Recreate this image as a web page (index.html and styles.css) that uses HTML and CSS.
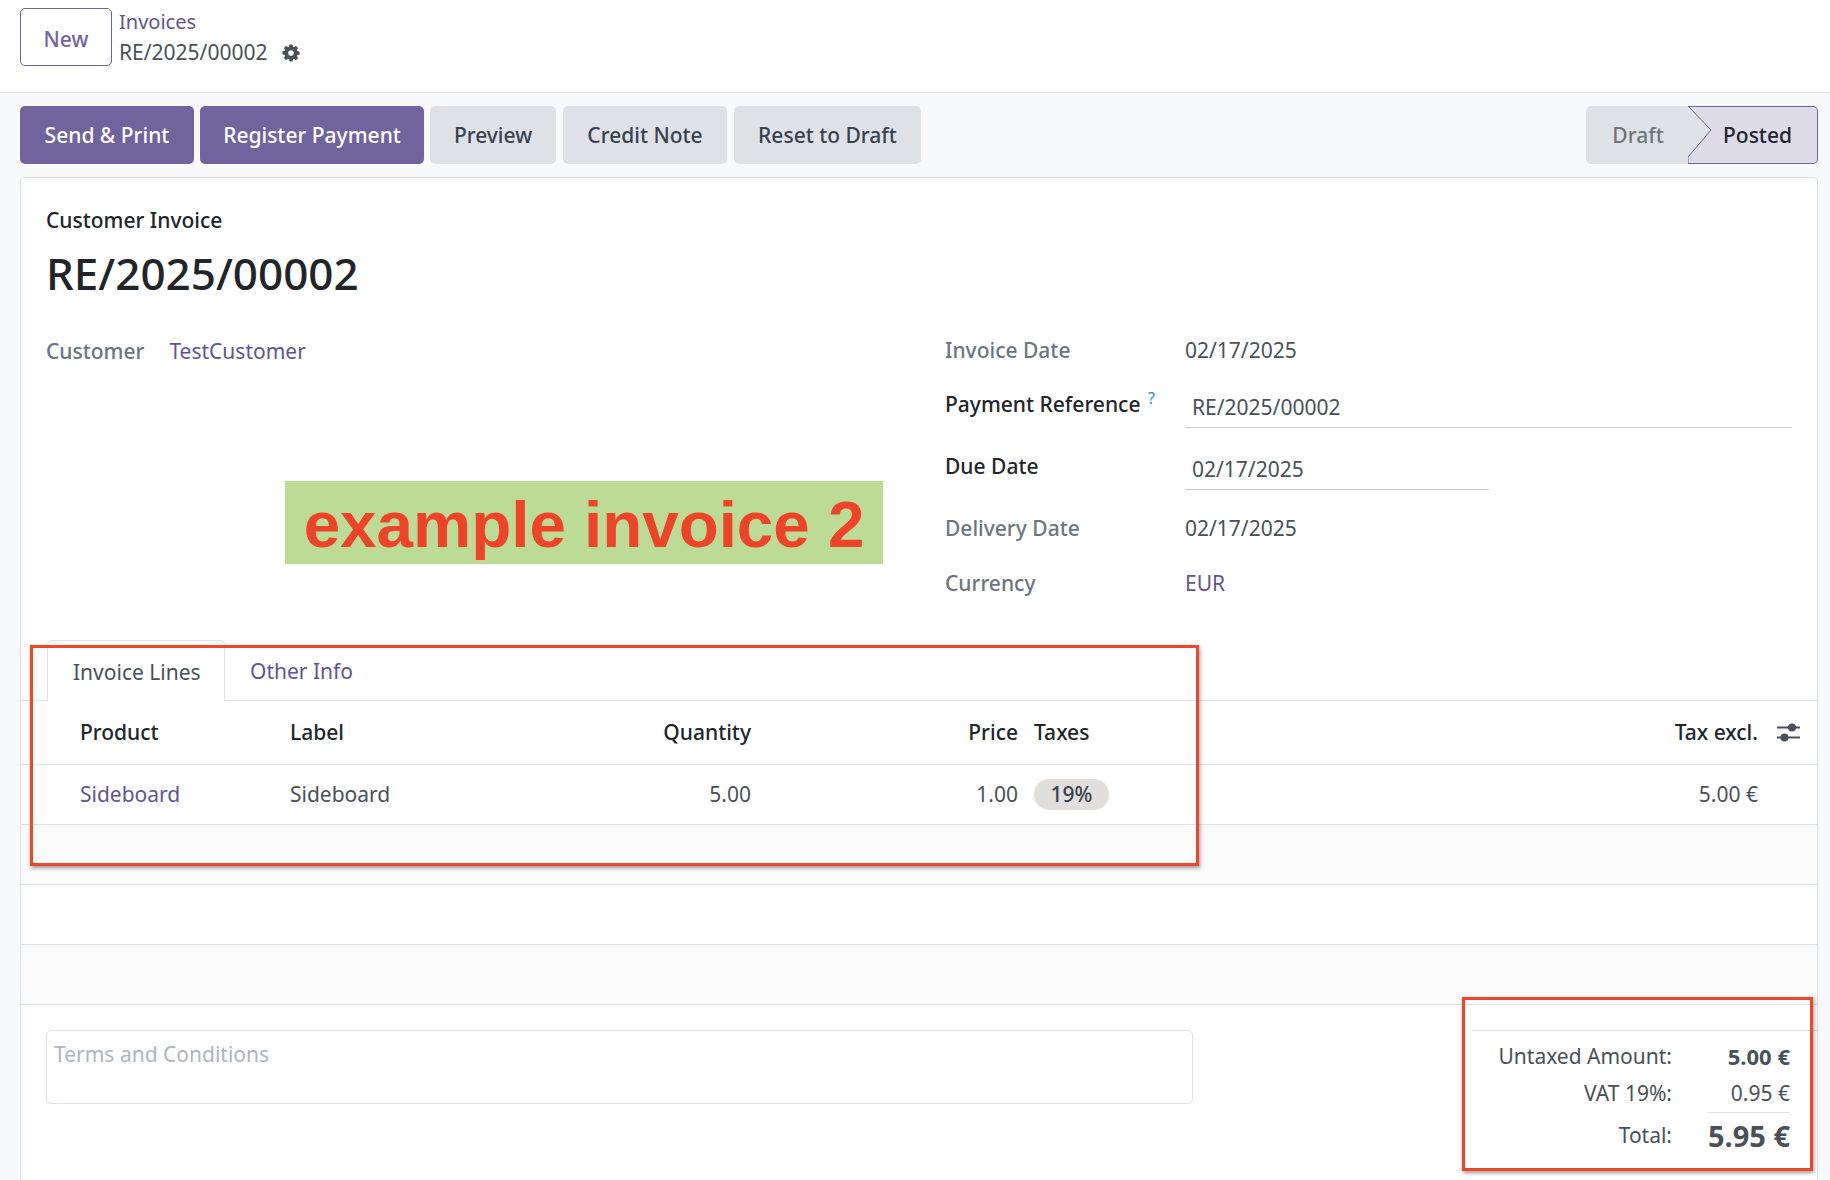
FILE: index.html

```html
<!DOCTYPE html>

<html>
    <head>
        <title>RE/2025/00002</title>
        <link rel="stylesheet" href="styles.css">
    </head>
    <body>
        <div class="topbar">
            <button class="btn_new">New</button>
            <div class="breadcrumb">
                <a class="link crumb_parent">Invoices</a>
                <div class="crumb_current">
                    <span>RE/2025/00002</span>
                    <svg class="gear" viewBox="0 0 1792 1792"><path fill="#495057" d="M1152 896q0-106-75-181t-181-75-181 75-75 181 75 181 181 75 181-75 75-181zm512-109v222q0 12-8 23t-20 13l-185 28q-19 54-39 91 35 50 107 138 10 12 10 25t-9 23q-27 37-99 108t-94 71q-12 0-26-9l-138-108q-44 23-91 38-16 136-29 186-7 28-36 28h-222q-14 0-24.500-8.500t-11.500-21.500l-28-184q-49-16-90-37l-141 107q-10 9-25 9-14 0-25-11-126-114-165-168-7-10-7-23 0-12 8-23 15-21 51-66.500t54-70.500q-27-50-41-99l-183-27q-13-2-21-12.500t-8-23.500v-222q0-12 8-23t19-13l186-28q14-46 39-92-40-57-107-138-10-12-10-24 0-10 9-23 26-36 98.500-107.500t94.500-71.500q13 0 26 10l138 107q44-23 91-38 16-136 29-186 7-28 36-28h222q14 0 24.500 8.500t11.500 21.500l28 184q49 16 90 37l142-107q9-9 24-9 13 0 25 10 129 119 165 170 7 8 7 22 0 12-8 23-15 21-51 66.500t-54 70.500q26 50 41 98l183 28q13 2 21 12.500t8 23.500z"/></svg>
                </div>
            </div>
        </div>

        <div class="actionbar">
            <button class="btn btn_primary btn_send">Send &amp; Print</button>
            <button class="btn btn_primary btn_register">Register Payment</button>
            <button class="btn btn_secondary btn_preview">Preview</button>
            <button class="btn btn_secondary btn_credit">Credit Note</button>
            <button class="btn btn_secondary btn_reset">Reset to Draft</button>
            <div class="statusbar">
                <div class="status_draft">Draft</div>
                <div class="status_posted">
                    <svg class="status_arrow" viewBox="0 0 24 58"><polygon points="0,0 23,24 0,51" fill="#dee2e6"/><polyline points="0,0 23,24 0,51 0,58" fill="none" stroke="#71639e" stroke-width="1"/></svg>
                    Posted
                </div>
            </div>
        </div>

        <div class="sheet">
            <div class="sheet_head">
                <div class="invoice_type">Customer Invoice</div>
                <h1>RE/2025/00002</h1>
            </div>

            <div class="groups">
                <div class="group_left">
                    <div class="customer">
                        <span class="label">Customer</span>
                        <a class="link">TestCustomer</a>
                    </div>
                    <div class="note">example invoice 2</div>
                </div>
                <div class="group_right">
                    <div class="field field_date">
                        <span class="label">Invoice Date</span>
                        <span class="value">02/17/2025</span>
                    </div>
                    <div class="field field_ref">
                        <span class="label label_strong">Payment Reference <sup class="help">?</sup></span>
                        <span class="value input input_wide">RE/2025/00002</span>
                    </div>
                    <div class="field field_due">
                        <span class="label label_strong">Due Date</span>
                        <span class="value input input_short">02/17/2025</span>
                    </div>
                    <div class="field field_delivery">
                        <span class="label">Delivery Date</span>
                        <span class="value">02/17/2025</span>
                    </div>
                    <div class="field field_currency">
                        <span class="label">Currency</span>
                        <a class="link value">EUR</a>
                    </div>
                </div>
            </div>

            <div class="tabs">
                <div class="tab tab_active">Invoice Lines</div>
                <a class="tab link">Other Info</a>
            </div>

            <table class="lines">
                <colgroup>
                    <col class="col_product">
                    <col class="col_label">
                    <col class="col_qty">
                    <col class="col_price">
                    <col class="col_taxes">
                    <col class="col_total">
                    <col class="col_opt">
                </colgroup>
                <thead>
                    <tr>
                        <th class="first">Product</th>
                        <th>Label</th>
                        <th class="num">Quantity</th>
                        <th class="num">Price</th>
                        <th class="taxes">Taxes</th>
                        <th class="num">Tax excl.</th>
                        <th>
                            <svg class="sliders" viewBox="0 0 23 19">
                                <g stroke="#495057" stroke-width="2" fill="#495057">
                                    <line x1="0" y1="4.500" x2="23" y2="4.500"/>
                                    <line x1="0" y1="14.500" x2="23" y2="14.500"/>
                                </g>
                                <circle cx="15" cy="4.500" r="4" fill="#495057"/>
                                <circle cx="7.500" cy="14.500" r="4" fill="#495057"/>
                            </svg>
                        </th>
                    </tr>
                </thead>
                <tbody>
                    <tr>
                        <td class="first"><a class="link">Sideboard</a></td>
                        <td>Sideboard</td>
                        <td class="num">5.00</td>
                        <td class="num">1.00</td>
                        <td class="taxes"><span class="badge">19%</span></td>
                        <td class="num">5.00 €</td>
                        <td></td>
                    </tr>
                    <tr class="stripe"><td colspan="7"></td></tr>
                    <tr><td colspan="7"></td></tr>
                    <tr class="stripe"><td colspan="7"></td></tr>
                </tbody>
            </table>

            <div class="footer">
                <div class="terms">Terms and Conditions</div>
                <div class="totals">
                    <div class="totals_row">
                        <span class="totals_label">Untaxed Amount:</span>
                        <span class="totals_value totals_bold">5.00 €</span>
                    </div>
                    <div class="totals_row">
                        <span class="totals_label">VAT 19%:</span>
                        <span class="totals_value">0.95 €</span>
                    </div>
                    <div class="totals_row totals_grand">
                        <span class="totals_label">Total:</span>
                        <span class="totals_value">5.95 €</span>
                    </div>
                </div>
            </div>
        </div>

        <!-- red marks drawn over the screenshot -->
        <div class="mark mark_lines"></div>
        <div class="mark mark_totals"></div>
    </body>
</html>
```

FILE: styles.css

```css
html, body {
    margin: 0;      padding: 0;
    height: 100%;
    overflow: hidden;

    --purple:       #71639e;
    --link:         #5f5491;
    --text:         #495057;
    --dark:         #212529;
    --line:         #dee2e6;
    --stripe:       #fafafa;

    color: var(--text);
    background-color: #f8f9fa;
    font-family: "Noto Sans", sans-serif;
    font-size: 21px;
}

button {
    font-family: inherit;
    font-size: 21px;
    cursor: pointer;
}

.link {
    color: var(--link);
    text-decoration: none;
}

/* Top bar */
.topbar {
    display: flex;
    gap: 7px;
    height: 84px;
    padding: 8px 20px 0 20px;
    background-color: #ffffff;
    border-bottom: 1px solid var(--line);
}
.btn_new {
    width: 92px;    height: 58px;
    padding: 3px 0 0 0;
    color: var(--purple);
    font-weight: 500;
    background-color: #ffffff;
    border: 1px solid var(--purple);
    border-radius: 5px;
}
.breadcrumb {
    display: flex;
    flex-direction: column;
    line-height: 29px;
    margin-top: -1px;
}
.crumb_parent { font-size: 20px; }
.crumb_current {
    display: flex;
    align-items: center;
    gap: 14px;
    margin-top: 2px;
}
.gear { width: 20px;    height: 20px; margin-top: 1px; }

/* Action bar */
.actionbar {
    display: flex;
    gap: 6px;
    padding: 13px 12px 13px 20px;
}
.btn {
    height: 58px;
    padding: 0 0 1px 0;
    border: none;
    border-radius: 5px;
    font-weight: 500;
}
.btn_primary    { color: #ffffff;   background-color: var(--purple); }
.btn_secondary  { color: #374151;   background-color: var(--line); }
.btn_send       { width: 174px; }
.btn_register   { width: 224px; }
.btn_preview    { width: 126px; }
.btn_credit     { width: 164px; margin-left: 1px; }
.btn_reset      { width: 187px; margin-left: 1px; }

.statusbar {
    display: flex;
    margin-left: auto;
    height: 58px;
    font-weight: 500;
    line-height: 56px;
}
.status_draft {
    width: 102px;
    text-align: center;
    padding-left: 2px;
    box-sizing: border-box;
    color: #6c757d;
    background-color: var(--line);
    border-radius: 5px 0 0 5px;
    line-height: 58px;
}
.status_posted {
    position: relative;
    width: 130px;
    box-sizing: border-box;
    padding-left: 35px;
    color: var(--dark);
    background-color: #dedbe8;
    border: 1px solid var(--purple);
    border-left: none;
    border-radius: 0 5px 5px 0;
}
.status_arrow {
    position: absolute;
    top: -1px;  left: 0;
    width: 24px;    height: 58px;
}

/* Sheet */
.sheet {
    margin: 0 12px 0 20px;
    height: 1002px;
    background-color: #ffffff;
    border: 1px solid var(--line);
    border-bottom: none;
    border-radius: 5px 5px 0 0;
}
.sheet_head {
    padding: 28px 25px 0 25px;
}
.invoice_type {
    color: var(--dark);
    font-weight: 500;
    line-height: 29px;
}
h1 {
    margin: 0;
    margin-top: 8px;
    color: var(--dark);
    font-size: 44px;
    font-weight: 500;
    line-height: 60px;
}

.groups {
    display: flex;
    height: 337px;
    padding-left: 25px;
}
.group_left { width: 899px; }
.customer {
    display: flex;
    gap: 25px;
    margin-top: 34px;
    line-height: 29px;
}
.label {
    color: #6c757d;
    font-weight: 500;
}
.label_strong { color: var(--dark); }
.note {
    width: 598px;   height: 83px;
    margin-top: 115px;
    margin-left: 239px;
    color: #ee4327;
    background-color: #bcdc96;
    font-family: "Liberation Sans", sans-serif;
    font-size: 65.5px;
    font-weight: bold;
    line-height: 87px;
    text-align: center;
}

.group_right { flex: 1; }
.field {
    display: grid;
    grid-template-columns: 240px 1fr;
    align-items: start;
    line-height: 29px;
}
.field_date     { margin-top: 33px; }
.field_ref      { margin-top: 25px; }
.field_due      { margin-top: 24px; }
.field_delivery { margin-top: 24px; }
.field_currency { margin-top: 26px; }
.input {
    display: block;
    height: 37px;
    margin-top: 1px;
    padding: 2px 0 0 7px;
    box-sizing: border-box;
    border-bottom: 1px solid #c9cccf;
}
.input_wide     { width: 607px; }
.input_short    { width: 304px; }
.help {
    color: #2b8ead;
    font-size: 16px;
    font-weight: 400;
    line-height: 0;
    margin-left: 2px;
}

/* Tabs */
.tabs {
    display: flex;
    height: 60px;
    padding-left: 26px;
    margin-top: 0;
    border-bottom: 1px solid var(--line);
}
.tab {
    padding: 17px 25px 0 25px;
    line-height: 29px;
    box-sizing: border-box;
    white-space: nowrap;
}
.tab_active {
    width: 178px;
    height: 61px;
    color: var(--text);
    background-color: #ffffff;
    border: 1px solid var(--line);
    border-bottom: none;
    border-radius: 5px 5px 0 0;
}

/* Invoice lines */
.lines {
    width: 1796px;
    table-layout: fixed;
    border-collapse: collapse;
}
.col_product    { width: 262px; }
.col_label      { width: 217px; }
.col_qty        { width: 258px; }
.col_price      { width: 267px; }
.col_taxes      { width: 475px; }
.col_total      { width: 265px; }
.col_opt        { width: 52px; }

.lines th {
    height: 62px;
    padding: 0 7px 1px 7px;
    color: var(--dark);
    font-weight: 500;
    text-align: left;
    border-bottom: 1px solid var(--line);
}
.lines td {
    height: 58px;
    padding: 0 7px 1px 7px;
    border-bottom: 1px solid var(--line);
}
.lines .first   { padding-left: 59px; }
.lines .num     { text-align: right; }
.lines .taxes   { padding-left: 9px; }
.stripe td      { background-color: var(--stripe); }
.sliders {
    display: block;
    width: 23px;    height: 19px;
    margin-left: 5px;
}
.badge {
    display: inline-block;
    width: 75px;    height: 31px;
    color: #374151;
    background-color: #e2dedb;
    border-radius: 15px;
    font-weight: 500;
    line-height: 31px;
    text-align: center;
}

/* Footer */
.footer {
    display: flex;
    justify-content: space-between;
    padding-left: 25px;
    padding-top: 25px;
}
.terms {
    width: 1147px;  height: 74px;
    padding: 9px 7px;
    box-sizing: border-box;
    color: #adb5bd;
    line-height: 29px;
    border: 1px solid var(--line);
    border-radius: 5px;
}
.totals {
    width: 345px;
    border-top: 1px solid var(--line);
    padding-top: 7px;
}
.totals_row {
    display: flex;
    justify-content: flex-end;
    line-height: 37px;
    padding-right: 27px;
}
.totals_label {
    text-align: right;
}
.totals_value {
    width: 118px;
    text-align: right;
}
.totals_bold {
    font-size: 22px;
    font-weight: 700;
}
.totals_grand {
    line-height: 43px;
}
.totals_grand .totals_label {
    padding-top: 2px;
}
.totals_grand .totals_value {
    width: 83px;
    margin-left: 35px;
    padding-top: 2px;
    font-size: 29px;
    font-weight: 700;
    line-height: 42px;
    border-top: 1px solid var(--line);
}

/* Red marks */
.mark {
    position: absolute;
    box-sizing: border-box;
    border: 3px solid #ee4628;
    box-shadow: 1px 2px 4px rgba(0, 0, 0, 0.4);
}
.mark_lines     { left: 30px;   top: 645px; width: 1169px;  height: 221px; }
.mark_totals    { left: 1462px; top: 997px; width: 351px;   height: 174px; }
```
